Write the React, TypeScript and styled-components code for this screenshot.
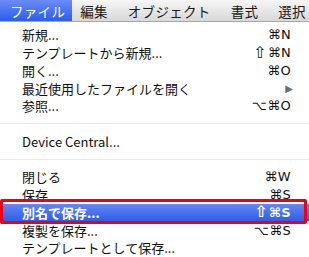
import styled, { createGlobalStyle } from 'styled-components';

const GlobalStyle = createGlobalStyle`
  html, body {
    margin: 0;
    padding: 0;
    background: #ffffff;
    overflow: hidden;
  }
  body {
    font-family: "Noto Sans CJK JP", "Noto Sans", sans-serif;
  }
`;

type Entry =
  | { kind: 'item'; label: string; keys?: string; submenu?: boolean; active?: boolean }
  | { kind: 'sep' };

const menuTitles = ['ファイル', '編集', 'オブジェクト', '書式', '選択'];

const entries: Entry[] = [
  { kind: 'item', label: '新規...', keys: '⌘N' },
  { kind: 'item', label: 'テンプレートから新規...', keys: '⇧⌘N' },
  { kind: 'item', label: '開く...', keys: '⌘O' },
  { kind: 'item', label: '最近使用したファイルを開く', submenu: true },
  { kind: 'item', label: '参照...', keys: '⌥⌘O' },
  { kind: 'sep' },
  { kind: 'item', label: 'Device Central...' },
  { kind: 'sep' },
  { kind: 'item', label: '閉じる', keys: '⌘W' },
  { kind: 'item', label: '保存', keys: '⌘S' },
  { kind: 'item', label: '別名で保存...', keys: '⇧⌘S', active: true },
  { kind: 'item', label: '複製を保存...', keys: '⌥⌘S' },
  { kind: 'item', label: 'テンプレートとして保存...' },
];

function Shortcut({ keys }: { keys: string }) {
  return (
    <Keys>
      {Array.from(keys).map((k, i) =>
        k === '⇧' ? <Shift key={i}>{k}</Shift> : <span key={i}>{k}</span>
      )}
    </Keys>
  );
}

export default function App() {
  return (
    <>
      <GlobalStyle />
      <Screen>
        <MenuBar>
          {menuTitles.map((t, i) => (
            <MenuTitle key={t} $open={i === 0}>
              {t}
            </MenuTitle>
          ))}
        </MenuBar>
        <Dropdown>
          {entries.map((e, i) =>
            e.kind === 'sep' ? (
              <Separator key={i} />
            ) : (
              <Item key={i} $active={!!e.active}>
                <Label>{e.label}</Label>
                {e.keys && <Shortcut keys={e.keys} />}
                {e.submenu && <Arrow>▶</Arrow>}
                {e.active && <Callout />}
              </Item>
            )
          )}
        </Dropdown>
      </Screen>
    </>
  );
}

const Screen = styled.div`
  width: 309px;
  height: 257px;
  overflow: hidden;
  background: #ffffff;
`;

const MenuBar = styled.div`
  height: 22px;
  display: flex;
  align-items: stretch;
  background: linear-gradient(#f6f6f6, #d8d8d8);
  border-bottom: 1px solid #a8a8a8;
  box-sizing: border-box;
  overflow: hidden;
`;

const MenuTitle = styled.div<{ $open: boolean }>`
  flex: none;
  display: flex;
  align-items: center;
  padding: ${(p) => (p.$open ? '0 7px 0 10px' : '0 12px 0 8px')};
  font-size: 13.5px;
  letter-spacing: 0.3px;
  color: ${(p) => (p.$open ? '#ffffff' : '#1a1a1a')};
  background: ${(p) => (p.$open ? 'linear-gradient(#6a8cf7, #2d5ceb)' : 'transparent')};
  white-space: nowrap;
`;

const Dropdown = styled.div`
  padding-top: 4px;
  display: flex;
  flex-direction: column;
`;

const Item = styled.div<{ $active: boolean }>`
  position: relative;
  height: 17.75px;
  display: flex;
  align-items: center;
  padding: 0 18px 0 22px;
  font-size: 13px;
  color: ${(p) => (p.$active ? '#ffffff' : '#111111')};
  background: ${(p) => (p.$active ? 'linear-gradient(#6487f6, #2f5de8)' : 'transparent')};
  font-weight: ${(p) => (p.$active ? 600 : 400)};
`;

const Label = styled.span`
  flex: 1;
  white-space: nowrap;
`;

const Keys = styled.span`
  display: flex;
  align-items: center;
  font-family: "DejaVu Sans", "Noto Sans", sans-serif;
  font-size: 13px;
  letter-spacing: 0.3px;
  white-space: nowrap;
`;

const Shift = styled.span`
  font-size: 16px;
  line-height: 1;
  margin-right: 1px;
`;

const Arrow = styled.span`
  font-family: "DejaVu Sans", sans-serif;
  font-size: 10px;
  color: #6e6e6e;
  margin-right: -2px;
`;

const Separator = styled.div`
  height: 17.75px;
  display: flex;
  align-items: center;
  &::before {
    content: '';
    flex: 1;
    height: 1px;
    background: #e8e8e8;
  }
`;

const Callout = styled.div`
  position: absolute;
  left: 0;
  right: 2px;
  top: -5px;
  bottom: -3px;
  border: 3px solid #f0000f;
  border-radius: 2px;
  pointer-events: none;
`;
